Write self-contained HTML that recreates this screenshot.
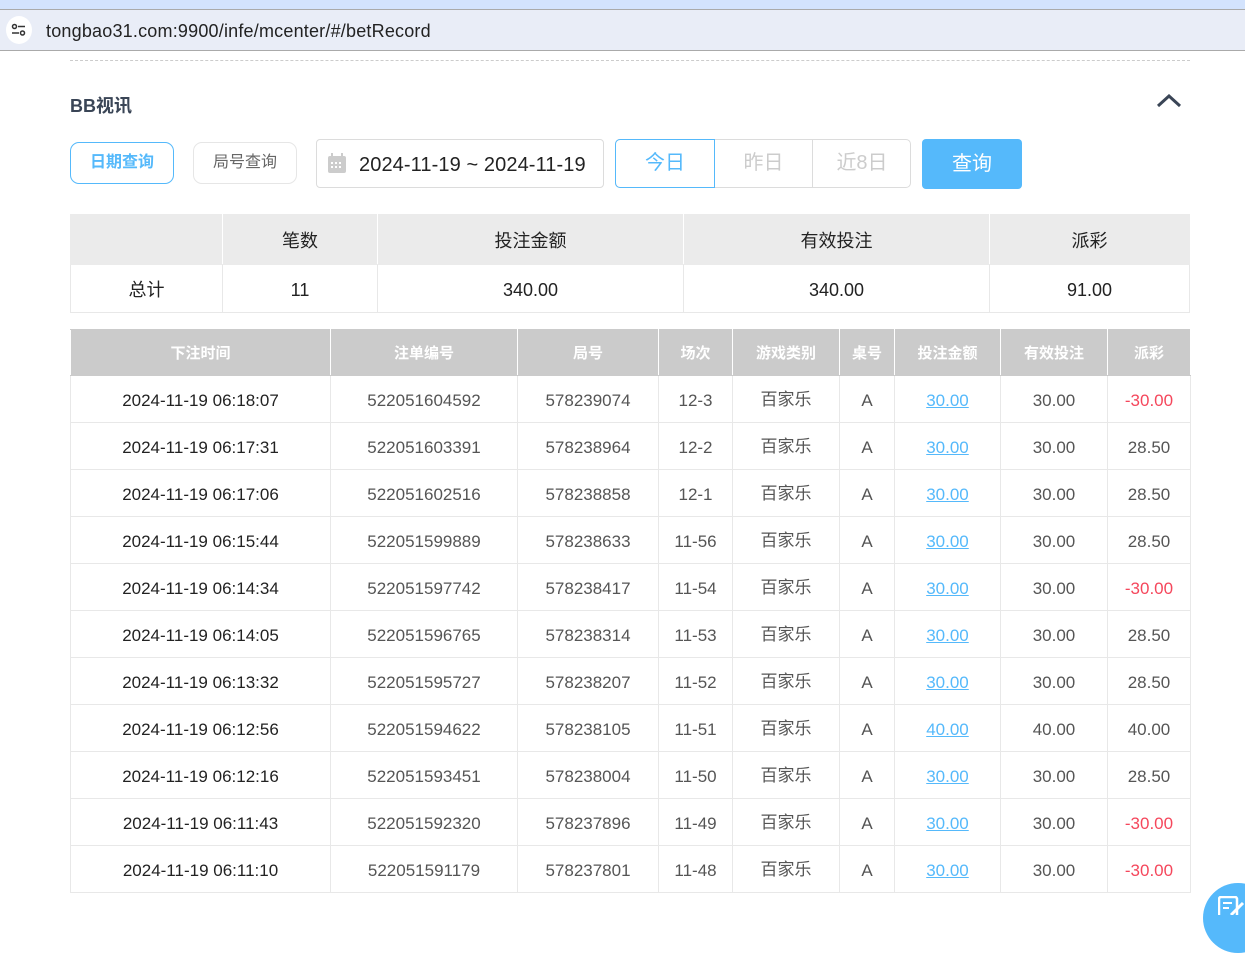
<!DOCTYPE html>
<html><head><meta charset="utf-8"><style>
*{box-sizing:border-box;margin:0;padding:0}
body{width:1245px;height:915px;overflow:hidden;background:#fff;font-family:"Liberation Sans","Noto Sans CJK SC",sans-serif;position:relative;color:#333}
.abs{position:absolute}
table{border-collapse:collapse;position:absolute;left:70px;table-layout:fixed}
td,th{text-align:center;border:1px solid #e8e8e8}
#b td{padding-top:4px;line-height:20px}
</style></head><body>
<div class="abs" style="left:0;top:0;width:1245px;height:10px;background:#d3e3fd;border-bottom:1px solid #aaa"></div>
<div class="abs" style="left:0;top:10px;width:1245px;height:41px;background:#e9edf7;border-bottom:1px solid #aaa"></div>
<div class="abs" style="left:6px;top:16px;width:26px;height:28px;border-radius:50%;background:#fff"></div>
<svg class="abs" style="left:11px;top:23px" width="16" height="14"><circle cx="3.5" cy="3.5" r="2" fill="none" stroke="#333" stroke-width="1.5"/><line x1="7" y1="3.5" x2="14" y2="3.5" stroke="#333" stroke-width="1.5"/><line x1="1" y1="10" x2="8" y2="10" stroke="#333" stroke-width="1.5"/><circle cx="11.5" cy="10" r="2" fill="none" stroke="#333" stroke-width="1.5"/></svg>
<div class="abs" style="left:46px;top:21px;font-size:18px;color:#222;letter-spacing:0.2px">tongbao31.com:9900/infe/mcenter/#/betRecord</div>
<div class="abs" style="left:70px;top:60px;width:1120px;border-top:1px dashed #ccc"></div>
<div class="abs" style="left:70px;top:92px;font-size:18px;font-weight:bold;color:#3a4556">BB视讯</div>
<svg class="abs" style="left:1156px;top:94px" width="26" height="14"><path d="M2 12 L13 2 L24 12" fill="none" stroke="#3a4556" stroke-width="3"/></svg>
<div class="abs" style="left:70px;top:142px;width:104px;height:42px;border:1px solid #55b9fb;border-radius:9px;color:#55b9fb;font-weight:bold;font-size:16px;text-align:center;line-height:40px">日期查询</div>
<div class="abs" style="left:193px;top:142px;width:104px;height:42px;border:1px solid #e6e6e6;border-radius:9px;color:#666;font-size:16px;text-align:center;line-height:40px">局号查询</div>
<div class="abs" style="left:316px;top:139px;width:288px;height:49px;border:1px solid #dcdcdc;border-radius:4px"></div>
<svg class="abs" style="left:328px;top:153px" width="18" height="20"><rect x="0" y="3" width="18" height="17" rx="2" fill="#ccc"/><rect x="3" y="0" width="2" height="5" fill="#ccc"/><rect x="13" y="0" width="2" height="5" fill="#ccc"/><g fill="#fff"><rect x="3" y="9" width="2" height="2"/><rect x="7" y="9" width="2" height="2"/><rect x="11" y="9" width="2" height="2"/><rect x="3" y="13" width="2" height="2"/><rect x="7" y="13" width="2" height="2"/><rect x="11" y="13" width="2" height="2"/></g></svg>
<div class="abs" style="left:359px;top:154px;font-size:20px;color:#222;letter-spacing:0.1px">2024-11-19 ~ 2024-11-19</div>
<div class="abs" style="left:615px;top:139px;width:296px;height:49px;border:1px solid #dcdcdc;border-radius:5px"></div>
<div class="abs" style="left:615px;top:139px;width:100px;height:49px;border:1px solid #55b9fb;border-radius:5px 0 0 5px;color:#55b9fb;font-size:20px;text-align:center;line-height:47px">今日</div>
<div class="abs" style="left:715px;top:139px;width:98px;height:49px;border-right:1px solid #dcdcdc;color:#ccc;font-size:20px;text-align:center;line-height:49px">昨日</div>
<div class="abs" style="left:813px;top:139px;width:98px;height:49px;color:#ccc;font-size:20px;text-align:center;line-height:49px">近8日</div>
<div class="abs" style="left:922px;top:139px;width:100px;height:50px;background:#55b9fb;border-radius:4px;color:#fff;font-size:20px;text-align:center;line-height:50px">查询</div>

<table style="top:214px;width:1120px;font-size:18px;color:#222">
<colgroup><col style="width:152px"><col style="width:155px"><col style="width:306px"><col style="width:306px"><col style="width:200px"></colgroup>
<tr style="height:50px;background:#ebebeb"><td style="border-color:#ebebeb #fff #ebebeb #ebebeb"></td><td style="border-color:#ebebeb #fff">笔数</td><td style="border-color:#ebebeb #fff">投注金额</td><td style="border-color:#ebebeb #fff">有效投注</td><td style="border-color:#ebebeb">派彩</td></tr>
<tr style="height:48px"><td>总计</td><td style="padding-top:4px">11</td><td style="padding-top:4px">340.00</td><td style="padding-top:4px">340.00</td><td style="padding-top:4px">91.00</td></tr>
</table>

<table style="top:329px;width:1120px;font-size:17px;color:#333">
<colgroup><col style="width:260px"><col style="width:187px"><col style="width:141px"><col style="width:74px"><col style="width:107px"><col style="width:55px"><col style="width:106px"><col style="width:107px"><col style="width:83px"></colgroup>
<tr style="height:46px;background:#cbcbcb;color:#fff;font-weight:bold;font-size:15px"><th style="border-color:#cbcbcb #fff">下注时间</th><th style="border-color:#cbcbcb #fff">注单编号</th><th style="border-color:#cbcbcb #fff">局号</th><th style="border-color:#cbcbcb #fff">场次</th><th style="border-color:#cbcbcb #fff">游戏类别</th><th style="border-color:#cbcbcb #fff">桌号</th><th style="border-color:#cbcbcb #fff">投注金额</th><th style="border-color:#cbcbcb #fff">有效投注</th><th style="border-color:#cbcbcb #fff">派彩</th></tr>
<tbody id="b"></tbody>
</table>
<div class="abs" style="left:1203px;top:883px;width:70px;height:70px;border-radius:50%;background:#55b9fb"></div>
<svg class="abs" style="left:1218px;top:896px" width="27" height="19"><rect x="1" y="1" width="18" height="20" rx="2" fill="none" stroke="#fff" stroke-width="2.5"/><line x1="5" y1="7" x2="14" y2="7" stroke="#fff" stroke-width="2"/><line x1="5" y1="12" x2="11" y2="12" stroke="#fff" stroke-width="2"/><line x1="13" y1="19" x2="25" y2="7" stroke="#fff" stroke-width="3"/></svg>
<script>
var d=[["06:18:07","522051604592","578239074","12-3","30.00","30.00","-30.00"],["06:17:31","522051603391","578238964","12-2","30.00","30.00","28.50"],["06:17:06","522051602516","578238858","12-1","30.00","30.00","28.50"],["06:15:44","522051599889","578238633","11-56","30.00","30.00","28.50"],["06:14:34","522051597742","578238417","11-54","30.00","30.00","-30.00"],["06:14:05","522051596765","578238314","11-53","30.00","30.00","28.50"],["06:13:32","522051595727","578238207","11-52","30.00","30.00","28.50"],["06:12:56","522051594622","578238105","11-51","40.00","40.00","40.00"],["06:12:16","522051593451","578238004","11-50","30.00","30.00","28.50"],["06:11:43","522051592320","578237896","11-49","30.00","30.00","-30.00"],["06:11:10","522051591179","578237801","11-48","30.00","30.00","-30.00"]];
var h="";d.forEach(function(r){h+='<tr style="height:47px"><td style="color:#222">2024-11-19 '+r[0]+'</td><td style="color:#555">'+r[1]+'</td><td style="color:#555">'+r[2]+'</td><td style="color:#555">'+r[3]+'</td><td style="color:#555;padding-top:2px">百家乐</td><td style="color:#555">A</td><td><u style="color:#55b9fb">'+r[4]+'</u></td><td style="color:#555">'+r[5]+'</td><td style="color:'+(r[6][0]=="-"?"#f5475c":"#555")+'">'+r[6]+'</td></tr>'});
document.getElementById("b").innerHTML=h;
</script>
</body></html>
